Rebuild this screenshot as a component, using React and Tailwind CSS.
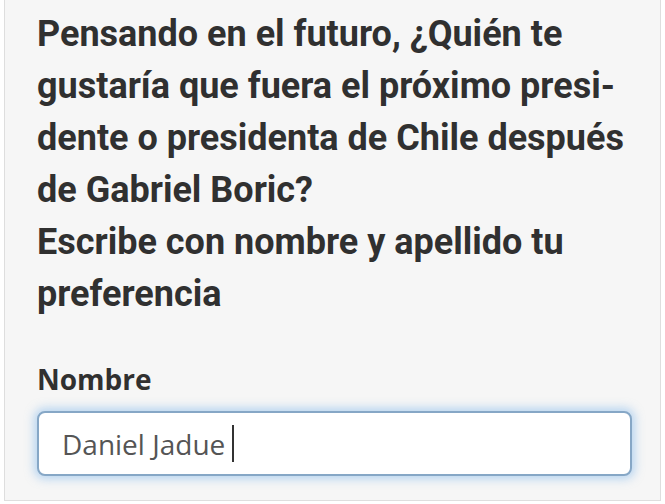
import React from 'react';

export default function App() {
  return (
    <div className="w-[665px] h-[504px] bg-white overflow-hidden">
      <div className="ml-[4px] w-[657px] h-[501px] bg-[#f6f6f6] border-x border-b border-[#dedede] pl-[32px] pr-[16px] pt-[8px]">
        <h1
          className="text-[36px] leading-[52px] font-bold text-[#303030]"
          style={{ fontFamily: 'Roboto, "Liberation Sans", sans-serif' }}
        >
          Pensando en el futuro, ¿Quién te<br />
          gustaría que fuera el próximo presi-<br />
          dente o presidenta de Chile después<br />
          de Gabriel Boric?
        </h1>
        <p
          className="text-[36px] leading-[52px] font-bold text-[#303030]"
          style={{ fontFamily: 'Roboto, "Liberation Sans", sans-serif' }}
        >
          Escribe con nombre y apellido tu<br />
          preferencia
        </p>
        <label
          className="block mt-[41px] text-[28px] leading-[36px] font-bold text-[#303030]"
          style={{ fontFamily: '"Open Sans", "Noto Sans", sans-serif' }}
        >
          Nombre
        </label>
        <div className="mt-[14px] w-[595px] h-[65px] bg-white rounded-[8px] border-2 border-[#86a7c6] shadow-[0_0_10px_3px_rgba(120,180,235,0.5)] flex items-center pl-[23px]">
          <span
            className="text-[28px] text-[#555555]"
            style={{ fontFamily: '"Open Sans", "Noto Sans", sans-serif' }}
          >
            Daniel Jadue
          </span>
          <span className="ml-[7px] w-[2px] h-[37px] bg-[#333333]" />
        </div>
      </div>
    </div>
  );
}
